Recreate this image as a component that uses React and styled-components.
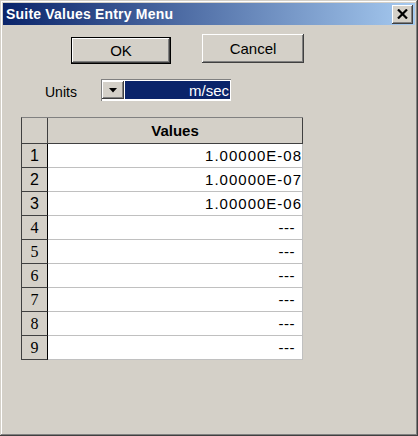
import React from 'react';
import styled, { createGlobalStyle } from 'styled-components';

const Global = createGlobalStyle`
  html, body { margin: 0; padding: 0; background: #D4D0C8; }
  body {
    width: 418px; height: 436px; overflow: hidden;
    font-family: "Liberation Sans", Arial, sans-serif;
  }
`;

const Window = styled.div`
  box-sizing: border-box;
  width: 418px;
  height: 436px;
  background: #D4D0C8;
  padding: 3px;
  display: flex;
  flex-direction: column;
  box-shadow: inset -1px -1px #404040, inset 1px 1px #D4D0C8,
    inset -2px -2px #808080, inset 2px 2px #ffffff;
`;

const TitleBar = styled.div`
  height: 22px;
  flex: none;
  display: flex;
  align-items: center;
  padding-left: 3px;
  padding-right: 2px;
  background: linear-gradient(to right, #0A246A, #A6CAF0);
`;

const Title = styled.span`
  flex: 1;
  color: #fff;
  font-weight: bold;
  font-size: 14px;
  letter-spacing: 0.2px;
`;

const CloseBtn = styled.div`
  width: 21px;
  height: 19px;
  box-sizing: border-box;
  background: #D4D0C8;
  display: flex;
  align-items: center;
  justify-content: center;
  box-shadow: inset -1px -1px #404040, inset 1px 1px #ffffff,
    inset -2px -2px #808080, inset 2px 2px #D4D0C8;
`;

const ButtonRow = styled.div`
  display: flex;
  align-items: flex-start;
  gap: 31px;
  margin-top: 9px;
  padding-left: 68px;
`;

const Button = styled.div`
  box-sizing: border-box;
  width: ${p => (p.$default ? 100 : 102)}px;
  height: ${p => (p.$default ? 27 : 29)}px;
  margin-top: ${p => (p.$default ? 3 : 0)}px;
  display: flex;
  align-items: center;
  justify-content: center;
  font-size: 15px;
  color: #000;
  background: #D4D0C8;
  border: ${p => (p.$default ? '1px solid #000' : 'none')};
  box-shadow: ${p =>
    p.$default
      ? 'inset -1px -1px #404040, inset 1px 1px #ffffff, inset -2px -2px #808080'
      : 'inset -1px -1px #404040, inset 1px 1px #ffffff, inset -2px -2px #808080, inset 2px 2px #D4D0C8'};
`;

const UnitsRow = styled.div`
  display: flex;
  align-items: center;
  margin-top: 15px;
  padding-left: 42px;
`;

const Label = styled.span`
  width: 56px;
  font-size: 14px;
  color: #000;
  margin-top: 4px;
`;

const Combo = styled.div`
  box-sizing: border-box;
  width: 130px;
  height: 22px;
  padding: 2px 1px 2px 1px;
  display: flex;
  gap: 1px;
  background: #fff;
  box-shadow: inset 1px 1px #808080, inset -1px -1px #ffffff;
`;

const DropBtn = styled.div`
  box-sizing: border-box;
  width: 22px;
  height: 100%;
  display: flex;
  align-items: center;
  justify-content: center;
  background: #D4D0C8;
  box-shadow: inset -1px -1px #404040, inset 1px 1px #ffffff,
    inset -2px -2px #808080;
`;

const ComboValue = styled.div`
  flex: 1;
  background: #0A246A;
  color: #fff;
  font-size: 15px;
  display: flex;
  align-items: center;
  justify-content: flex-end;
  padding-right: 1px;
`;

const Grid = styled.div`
  margin-top: 16px;
  margin-left: 18px;
  display: grid;
  grid-template-columns: 26px 255px;
  grid-template-rows: 26px repeat(9, 24px);
  width: max-content;
  border-left: 1px solid #404040;
  border-top: 1px solid #808080;
`;

const HeadCell = styled.div`
  box-sizing: border-box;
  background: #D4D0C8;
  border-right: 1px solid #404040;
  border-bottom: 1px solid #404040;
  display: flex;
  align-items: center;
  justify-content: center;
  font-weight: bold;
  font-size: 15px;
  color: #000;
`;

const NumCell = styled.div`
  box-sizing: border-box;
  background: #D4D0C8;
  border-right: 1px solid #000;
  border-bottom: 1px solid #404040;
  display: flex;
  align-items: center;
  justify-content: center;
  font-size: 16px;
  color: #000;
  font-family: ${p => (p.$serif ? '"Liberation Serif", serif' : '"Liberation Sans", Arial, sans-serif')};
`;

const ValueCell = styled.div`
  box-sizing: border-box;
  background: #fff;
  border-right: 1px solid #C0C0C0;
  border-bottom: 1px solid #C0C0C0;
  display: flex;
  align-items: center;
  justify-content: flex-end;
  padding-right: ${p => (p.$empty ? 7 : 0)}px;
  font-size: 15px;
  letter-spacing: ${p => (p.$empty ? 0.5 : 1)}px;
  color: #000;
`;

const values = ['1.00000E-08', '1.00000E-07', '1.00000E-06', null, null, null, null, null, null];

export default function App() {
  return (
    <>
      <Global />
      <Window>
        <TitleBar>
          <Title>Suite Values Entry Menu</Title>
          <CloseBtn>
            <svg width="11" height="10" viewBox="0 0 11 10">
              <path d="M1 0.5 L10 9.5 M10 0.5 L1 9.5" stroke="#000" strokeWidth="2.2" />
            </svg>
          </CloseBtn>
        </TitleBar>
        <ButtonRow>
          <Button $default>OK</Button>
          <Button>Cancel</Button>
        </ButtonRow>
        <UnitsRow>
          <Label>Units</Label>
          <Combo>
            <DropBtn>
              <svg width="8" height="5" viewBox="0 0 8 5">
                <path d="M0 0 H8 L4 4.5 Z" fill="#000" />
              </svg>
            </DropBtn>
            <ComboValue>m/sec</ComboValue>
          </Combo>
        </UnitsRow>
        <Grid>
          <HeadCell />
          <HeadCell>Values</HeadCell>
          {values.map((v, i) => (
            <React.Fragment key={i}>
              <NumCell $serif={v === null}>{i + 1}</NumCell>
              <ValueCell $empty={v === null}>{v === null ? '---' : v}</ValueCell>
            </React.Fragment>
          ))}
        </Grid>
      </Window>
    </>
  );
}
